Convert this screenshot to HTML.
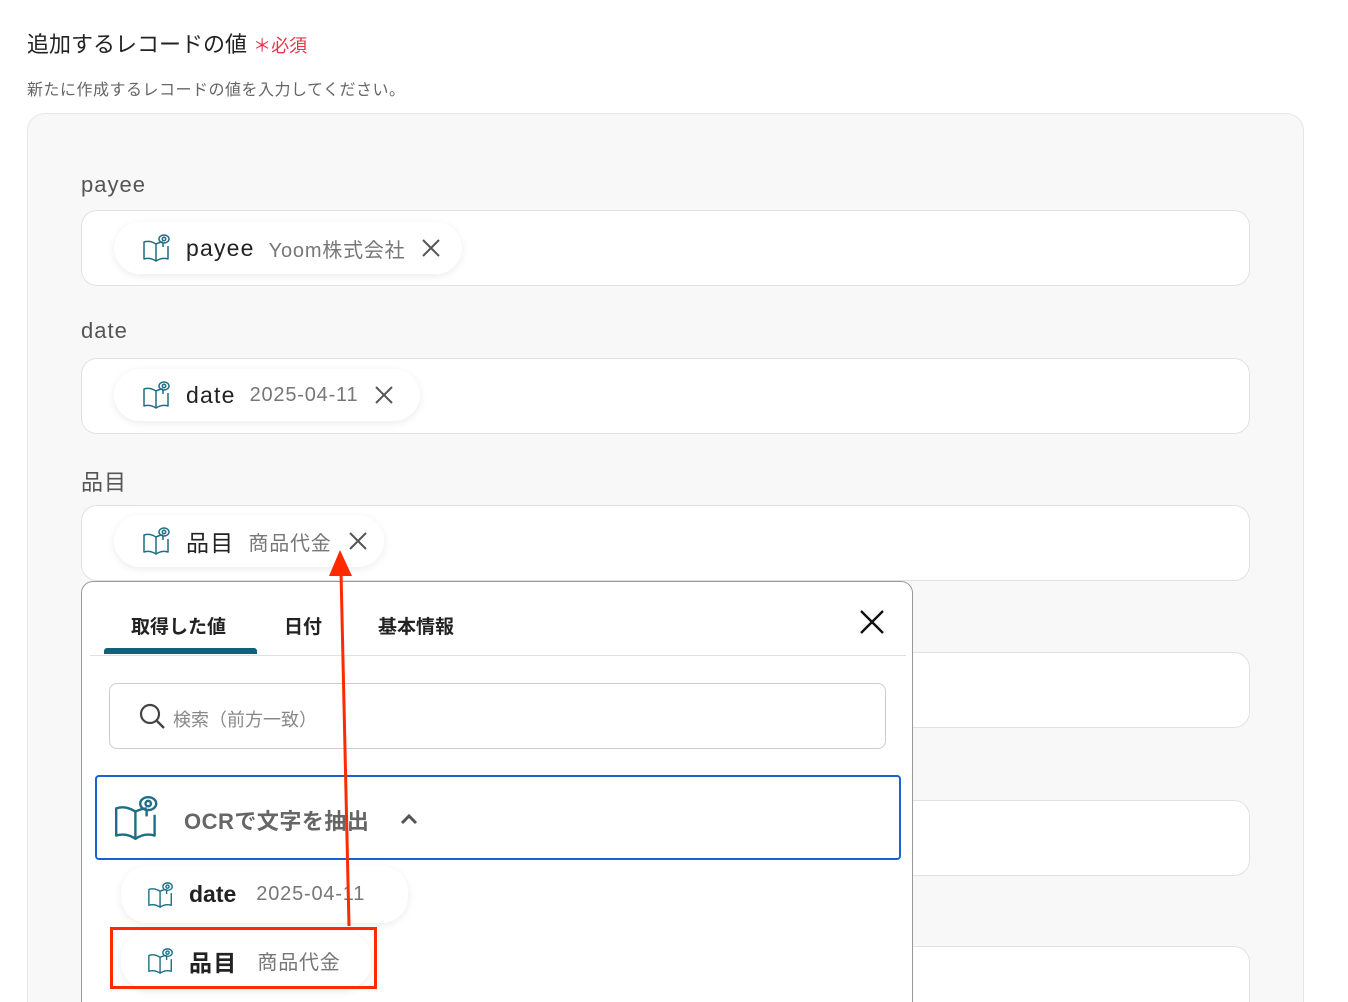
<!DOCTYPE html>
<html style="overflow:hidden;height:1002px"><head><meta charset="utf-8"><style>
*{box-sizing:border-box;margin:0;padding:0}
body{width:1348px;height:1002px;overflow:hidden;background:#fff;font-family:"Liberation Sans","Noto Sans CJK JP",sans-serif;position:relative;color:#333}
.a{position:absolute}
.field{position:absolute;left:81px;width:1169px;height:76px;background:#fff;border:1px solid #e2e2e2;border-radius:16px}
.lbl{position:absolute;left:81px;font-size:22px;color:#555;letter-spacing:1px}
.chip{position:absolute;height:52px;background:#fff;border-radius:26px;box-shadow:0 2px 8px rgba(0,0,0,.08);display:flex;align-items:center;padding-left:28px;font-size:23px;white-space:nowrap}
.chip .k{margin-left:14px;color:#222;letter-spacing:1.2px}
.chip .v{margin-left:14px;color:#777;font-size:20px;letter-spacing:.8px}
.chip .x{margin-left:16px}
</style></head><body>
<svg width="0" height="0" style="position:absolute"><defs>
<symbol id="bk" viewBox="0 0 30 30"><g fill="none" stroke="#1e6e86" stroke-width="1.5" stroke-linejoin="round"><path d="M2 9 L2 26 Q8 24 14 28 L14 11 Q8 7 2 9Z"/><path d="M14 11 Q18 9 21 9"/><path d="M26 13 L26 26 Q20 24 14 28"/><ellipse cx="22" cy="6" rx="5" ry="4"/><circle cx="22" cy="6" r="1.7"/><path d="M21 10 L21 14"/></g></symbol>
<symbol id="x" viewBox="0 0 20 20"><path d="M2 2L18 18M18 2L2 18" stroke="#555" stroke-width="2"/></symbol>
</defs></svg>

<div class="a" style="left:27px;top:27px;font-size:22px;color:#222">追加するレコードの値 <span style="color:#e8334a;font-size:18px">＊必須</span></div>
<div class="a" style="left:27px;top:76px;font-size:16px;color:#666;letter-spacing:.5px">新たに作成するレコードの値を入力してください。</div>
<div class="a" style="left:27px;top:113px;width:1277px;height:920px;background:#f8f8f8;border:1px solid #e6e6e6;border-radius:18px"></div>

<div class="lbl" style="top:172px">payee</div>
<div class="field" style="top:210px"></div>
<div class="chip" style="left:114px;top:222px;width:348px"><svg width="30" height="30"><use href="#bk"/></svg><span class="k">payee</span><span class="v">Yoom株式会社</span><svg class="x" width="20" height="20"><use href="#x"/></svg></div>

<div class="lbl" style="top:318px">date</div>
<div class="field" style="top:358px"></div>
<div class="chip" style="left:114px;top:369px;width:306px"><svg width="30" height="30"><use href="#bk"/></svg><span class="k">date</span><span class="v">2025-04-11</span><svg class="x" width="20" height="20"><use href="#x"/></svg></div>

<div class="lbl" style="top:465px">品目</div>
<div class="field" style="top:505px"></div>
<div class="chip" style="left:114px;top:515px;width:270px"><svg width="30" height="30"><use href="#bk"/></svg><span class="k">品目</span><span class="v">商品代金</span><svg class="x" width="20" height="20"><use href="#x"/></svg></div>

<div class="field" style="top:652px"></div>
<div class="field" style="top:800px"></div>
<div class="field" style="top:946px"></div>

<div class="a" style="left:81px;top:581px;width:832px;height:440px;background:#fff;border:1px solid #999;border-radius:12px">
  <div class="a" style="left:49px;top:30px;font-size:19px;font-weight:bold;color:#222">取得した値</div>
  <div class="a" style="left:202px;top:30px;font-size:19px;font-weight:bold;color:#222">日付</div>
  <div class="a" style="left:296px;top:30px;font-size:19px;font-weight:bold;color:#222">基本情報</div>
  <div class="a" style="left:22px;top:66px;width:153px;height:6px;background:#0e6378;border-radius:3px 3px 0 0"></div>
  <div class="a" style="left:8px;top:73px;width:816px;height:1px;background:#e0e0e0"></div>
  <svg class="a" style="left:776px;top:26px" width="28" height="28"><path d="M3 3L25 25M25 3L3 25" stroke="#111" stroke-width="2.4"/></svg>
  <div class="a" style="left:27px;top:101px;width:777px;height:66px;border:1px solid #ccc;border-radius:8px"></div>
  <svg class="a" style="left:56px;top:120px" width="28" height="28"><circle cx="12" cy="12" r="9" fill="none" stroke="#444" stroke-width="2.2"/><path d="M19 19L26 26" stroke="#444" stroke-width="2.4"/></svg>
  <div class="a" style="left:91px;top:124px;font-size:18px;color:#888">検索（前方一致）</div>
  <div class="a" style="left:13px;top:193px;width:806px;height:85px;border:2px solid #1a62d0;border-radius:4px"></div>
  <svg class="a" style="left:31px;top:210px" width="48" height="52" viewBox="0 0 30 30"><use href="#bk"/></svg>
  <div class="a" style="left:102px;top:222px;font-size:22px;font-weight:bold;color:#666;letter-spacing:.5px">OCRで文字を抽出</div>
  <svg class="a" style="left:318px;top:230px" width="18" height="14"><path d="M2 11L9 4L16 11" fill="none" stroke="#555" stroke-width="3"/></svg>
  <div class="chip" style="left:39px;top:284px;width:287px;height:57px;padding-left:26px"><svg width="28" height="28"><use href="#bk"/></svg><span class="k" style="font-weight:bold;letter-spacing:0">date</span><span class="v" style="margin-left:20px">2025-04-11</span></div>
  <div class="chip" style="left:39px;top:350px;width:250px;height:57px;padding-left:26px"><svg width="28" height="28"><use href="#bk"/></svg><span class="k" style="font-weight:bold">品目</span><span class="v" style="margin-left:20px">商品代金</span></div>
</div>
<div class="a" style="left:110px;top:927px;width:267px;height:62px;border:3px solid #ff2a00"></div>
<svg class="a" style="left:0;top:0" width="1348" height="1002"><path d="M349 926L341 572" stroke="#ff2a00" stroke-width="3"/><path d="M340 550L329 576L352 576Z" fill="#ff2a00"/></svg>
</body></html>
